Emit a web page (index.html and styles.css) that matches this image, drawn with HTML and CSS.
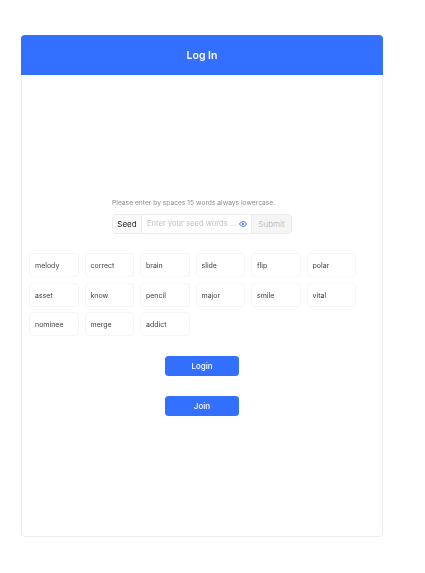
FILE: index.html
```html
<!DOCTYPE html>
<html lang="en">
<head>
<meta charset="utf-8">
<title>Log In</title>
<link rel="stylesheet" href="styles.css">
</head>
<body>
<main class="card">
  <header class="card-head">Log In</header>
  <div class="card-body">
    <div class="seed-block">
      <p class="hint">Please enter by spaces 15 words always lowercase.</p>
      <div class="seed">
        <span class="seed-label">Seed</span>
        <span class="seed-input">
          <span class="placeholder">Enter your seed words ...</span>
          <svg class="eye" viewBox="0 0 24 24" width="8" height="8" fill="none" stroke="#3370ff" stroke-width="2.800"><path d="M1.500 12C4 7 7.500 5 12 5S20 7 22.500 12C20 17 16.500 19 12 19S4 17 1.500 12Z"/><circle cx="12" cy="12" r="3.200" fill="#3370ff" stroke="none"/></svg>
        </span>
        <span class="seed-submit">Submit</span>
      </div>
    </div>
    <ul class="words">
      <li class="word">melody</li>
      <li class="word">correct</li>
      <li class="word">brain</li>
      <li class="word">slide</li>
      <li class="word">flip</li>
      <li class="word">polar</li>
      <li class="word">asset</li>
      <li class="word">know</li>
      <li class="word">pencil</li>
      <li class="word">major</li>
      <li class="word">smile</li>
      <li class="word">vital</li>
      <li class="word">nominee</li>
      <li class="word">merge</li>
      <li class="word">addict</li>
    </ul>
    <div class="actions">
      <button class="btn" type="button">Login</button>
      <button class="btn" type="button">Join</button>
    </div>
  </div>
</main>
</body>
</html>
```
FILE: styles.css
```css
* { box-sizing: border-box; }
html, body { margin: 0; padding: 0; background: #fff; }
body {
  width: 425px;
  height: 573px;
  padding: 35px 42px 0 21px;
  font-family: Inter, "Liberation Sans", sans-serif;
  overflow: hidden;
}
.card {
  height: 502px;
  border: 1px solid #ececec;
  border-radius: 4px;
  display: flex;
  flex-direction: column;
  will-change: opacity;
}
.card-head {
  height: 40px;
  margin: -1px -1px 0;
  background: #3370ff;
  border-radius: 4px 4px 0 0;
  color: #fff;
  font-size: 10.500px;
  font-weight: 600;
  display: flex;
  align-items: center;
  justify-content: center;
}
.card-body {
  flex: 1;
  display: flex;
  flex-direction: column;
  align-items: center;
  padding: 123px 7px 0;
}
.seed-block { width: 180px; }
.hint {
  margin: 0 0 6px;
  font-size: 6.700px;
  line-height: 10px;
  color: #8c8c8c;
  white-space: nowrap;
}
.seed {
  display: flex;
  height: 20px;
  width: 180px;
  border: 1px solid #ececec;
  border-radius: 4px;
  font-size: 8px;
  line-height: 18px;
  overflow: hidden;
}
.seed-label { flex: none; width: 29px; text-align: center; color: #1f1f1f; background: #fafafa; border-right: 1px solid #ececec; }
.seed-input { flex: 1; min-width: 0; display: flex; align-items: center; justify-content: space-between; padding: 0 4px 0 5px; }
.placeholder { color: #bfbfbf; white-space: nowrap; font-size: 7.600px; }
.eye { flex: none; }
.seed-submit { flex: none; width: 40px; text-align: center; color: #bfbfbf; background: #f5f5f5; border-left: 1px solid #ececec; }
.words {
  list-style: none;
  margin: 19px 0 0;
  padding: 0;
  align-self: stretch;
  display: grid;
  grid-template-columns: repeat(6, 49.500px);
  grid-auto-rows: 24px;
  column-gap: 6px;
  row-gap: 5.500px;
}
.word {
  border: 1px solid #f5f5f5;
  border-radius: 4px;
  padding-left: 5px;
  font-size: 7px;
  line-height: 23px;
  color: #404040;
}
.actions {
  margin-top: 20px;
  display: flex;
  flex-direction: column;
  gap: 20px;
}
.btn {
  width: 74px;
  height: 20px;
  padding: 0;
  border: 0;
  border-radius: 3.500px;
  background: #3370ff;
  color: #fff;
  font: 500 8px Inter, "Liberation Sans", sans-serif;
}
```
